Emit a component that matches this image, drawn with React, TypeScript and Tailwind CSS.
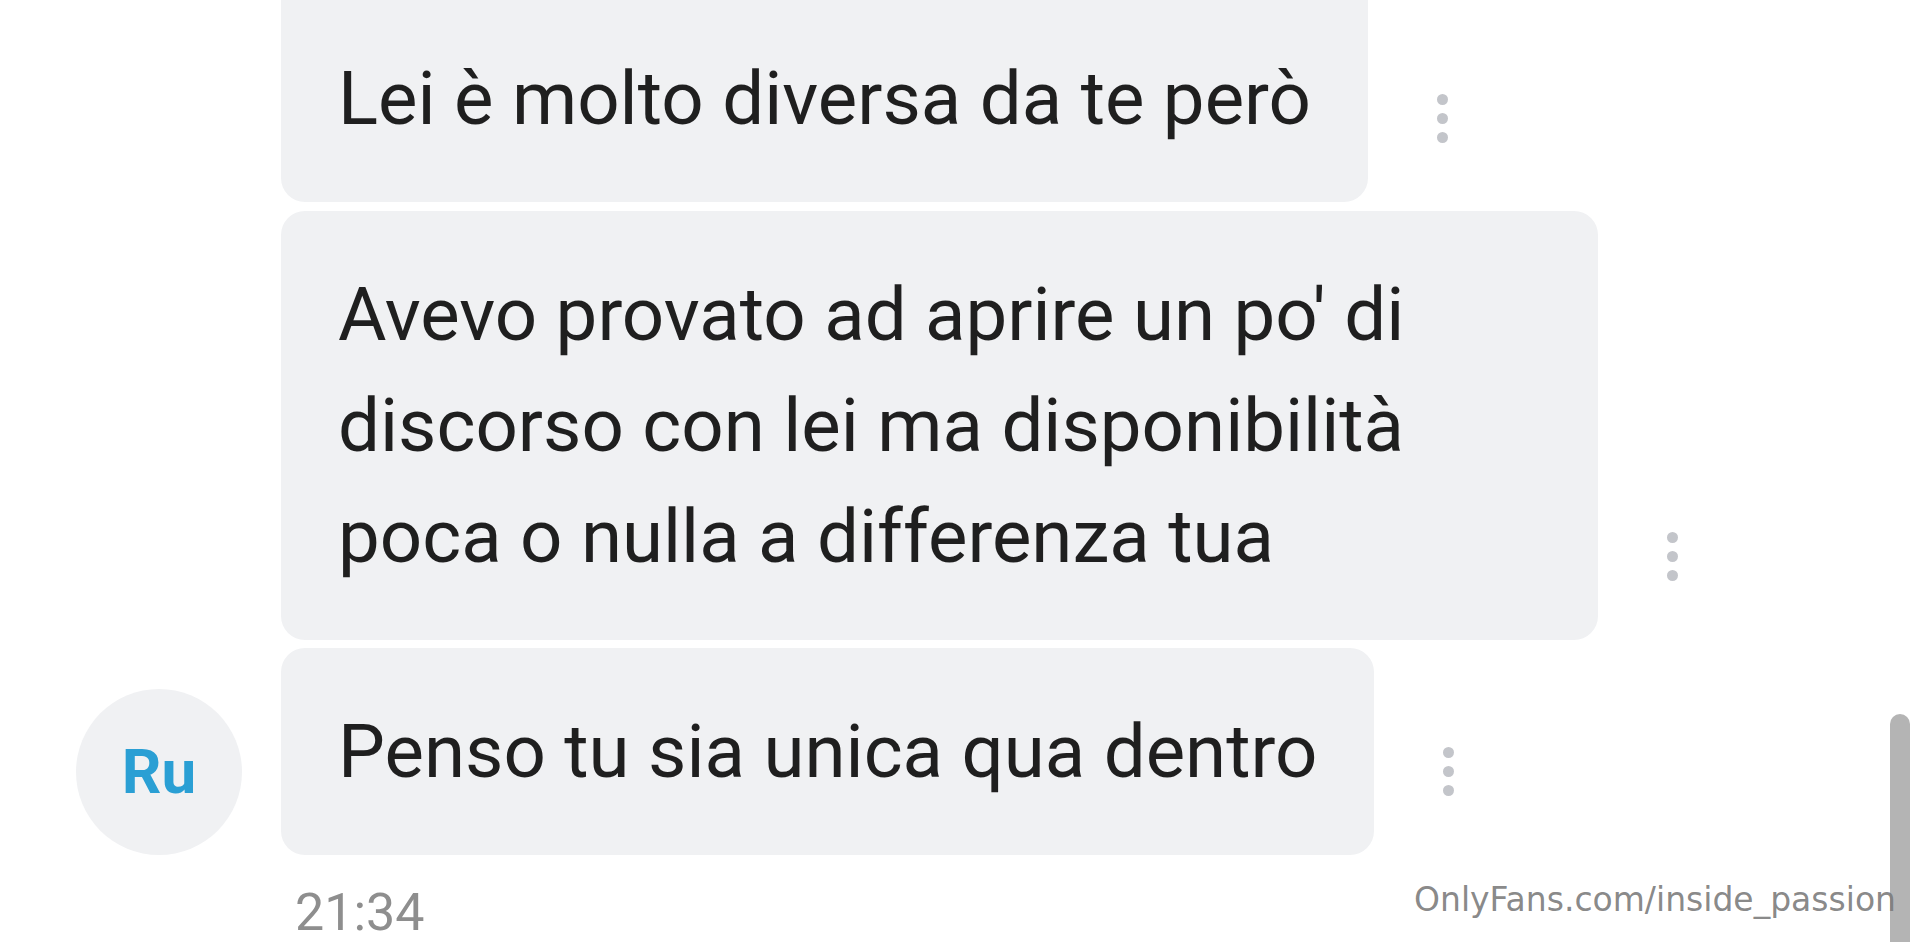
const messages = [
  { id: 1, text: "Lei è molto diversa da te però" },
  {
    id: 2,
    text: "Avevo provato ad aprire un po' di discorso con lei ma disponibilità poca o nulla a differenza tua",
  },
  { id: 3, text: "Penso tu sia unica qua dentro", avatar: "Ru" },
];

function MoreDots() {
  return (
    <div className="ml-[69px] mb-[59px] flex flex-col gap-[8px]">
      <span className="block w-[11px] h-[11px] rounded-full bg-[#c3c5ca]" />
      <span className="block w-[11px] h-[11px] rounded-full bg-[#c3c5ca]" />
      <span className="block w-[11px] h-[11px] rounded-full bg-[#c3c5ca]" />
    </div>
  );
}

export default function App() {
  return (
    <div className="relative h-screen w-full overflow-hidden bg-white font-['Roboto',sans-serif]">
      <div className="pl-[76px] flex flex-col">
        {messages.map((m, i) => (
          <div
            key={m.id}
            className={
              i === 0 ? "flex items-end -mt-[30px]" : i === 1 ? "flex items-end mt-[9px]" : "flex items-end mt-[8px]"
            }
          >
            <div className="w-[166px] mr-[39px] shrink-0">
              {m.avatar && (
                <div className="w-[166px] h-[166px] rounded-full bg-[#f0f1f3] flex items-center justify-center">
                  <span className="text-[62px] font-bold leading-none text-[#2a9fd4]">{m.avatar}</span>
                </div>
              )}
            </div>
            <div
              className={
                i === 0
                  ? "max-w-[1317px] rounded-[24px] bg-[#f0f1f3] px-[57px] pt-[73px] pb-[48px] text-[74.4px] leading-[111px] text-[#1f1f1f]"
                  : "max-w-[1317px] rounded-[24px] bg-[#f0f1f3] px-[57px] py-[48px] text-[74.4px] leading-[111px] text-[#1f1f1f]"
              }
            >
              {m.text}
            </div>
            <MoreDots />
          </div>
        ))}
        <div className="ml-[219px] mt-[28px] text-[52px] leading-[60px] text-[#8e8e8e]">21:34</div>
      </div>

      {/* scrollbar */}
      <div className="absolute right-[10px] top-[714px] bottom-0 w-[20px] rounded-t-full bg-[#b4b4b4]" />

      {/* watermark */}
      <div className="absolute right-[24px] top-[880px] font-['DejaVu_Sans',sans-serif] text-[33px] leading-[40px] text-[#7a7a7a]/90">
        OnlyFans.com/inside_passion
      </div>
    </div>
  );
}
